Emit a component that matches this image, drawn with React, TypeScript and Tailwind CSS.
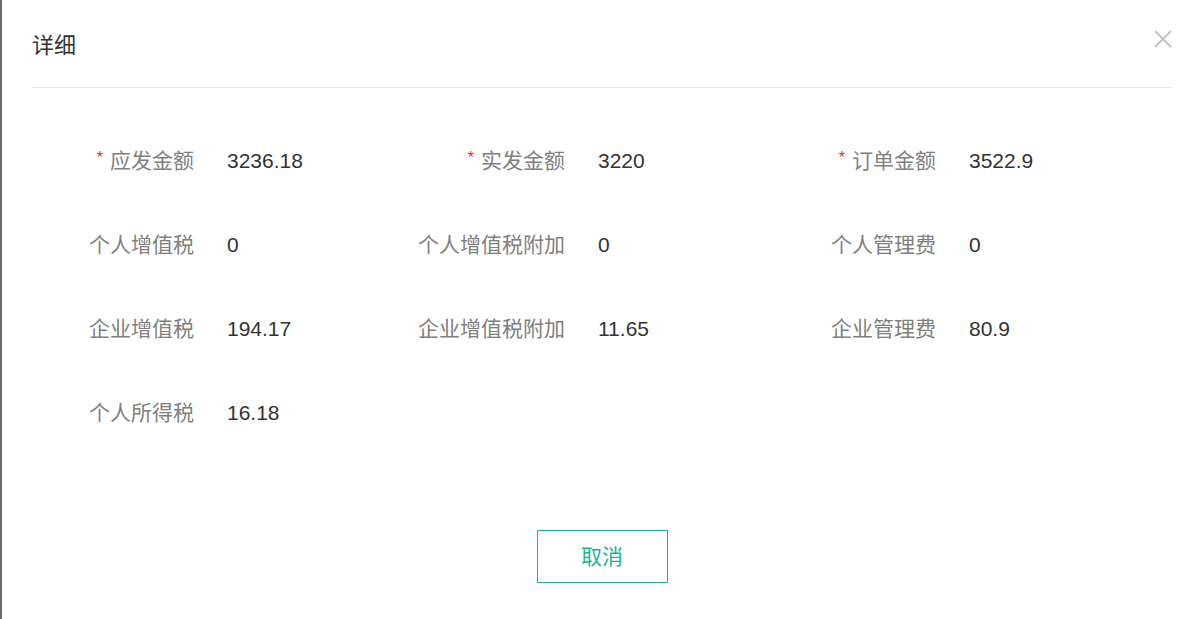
import React from "react";

const font = { fontFamily: '"Liberation Sans", Arial, "Noto Sans CJK SC", sans-serif' };

type Item = { label: string; value: string; req?: boolean };

const rows: Item[][] = [
  [
    { label: "应发金额", value: "3236.18", req: true },
    { label: "实发金额", value: "3220", req: true },
    { label: "订单金额", value: "3522.9", req: true },
  ],
  [
    { label: "个人增值税", value: "0" },
    { label: "个人增值税附加", value: "0" },
    { label: "个人管理费", value: "0" },
  ],
  [
    { label: "企业增值税", value: "194.17" },
    { label: "企业增值税附加", value: "11.65" },
    { label: "企业管理费", value: "80.9" },
  ],
  [{ label: "个人所得税", value: "16.18" }],
];

function Cell({ item }: { item: Item }) {
  return (
    <div className="flex items-center h-[84px]">
      <div className="w-[160px] flex justify-end items-center text-[21px] text-[#808080] whitespace-nowrap">
        {item.req && <span className="text-[16px] text-[#f5222d] mr-[7px] relative top-[-3px]">*</span>}
        <span>{item.label}</span>
      </div>
      <div className="ml-[33px] text-[21px] text-[#333] whitespace-nowrap">{item.value}</div>
    </div>
  );
}

export default function App() {
  return (
    <div className="flex w-[1198px] h-[619px] bg-white overflow-hidden" style={font}>
      <div className="w-[2px] bg-[#6a6a6a]" />
      <div className="flex-1 flex flex-col pl-[30px] pr-[26px] relative">
        <div className="h-[88px] border-b border-[#e8e8e8] flex items-center text-[22px] text-[#333] pt-[3px]">
          详细
        </div>
        <button className="absolute right-[26px] top-[30px] w-[18px] h-[18px] text-[#c4c4c4]">
          <svg viewBox="0 0 18 18" width="18" height="18" fill="none" stroke="currentColor" strokeWidth="2">
            <path d="M1 1L17 17M17 1L1 17" />
          </svg>
        </button>
        <div className="pt-[31px] pl-[2px] grid grid-cols-[371px_371px_371px]">
          {rows.map((r, i) =>
            [0, 1, 2].map((j) => (r[j] ? <Cell key={`${i}-${j}`} item={r[j]} /> : <div key={`${i}-${j}`} />))
          )}
        </div>
        <div className="mt-[75px] flex justify-center">
          <button className="w-[131px] h-[53px] border border-[#1ab394] text-[#1ab394] text-[21px] bg-white flex items-center justify-center">
            取消
          </button>
        </div>
      </div>
    </div>
  );
}
